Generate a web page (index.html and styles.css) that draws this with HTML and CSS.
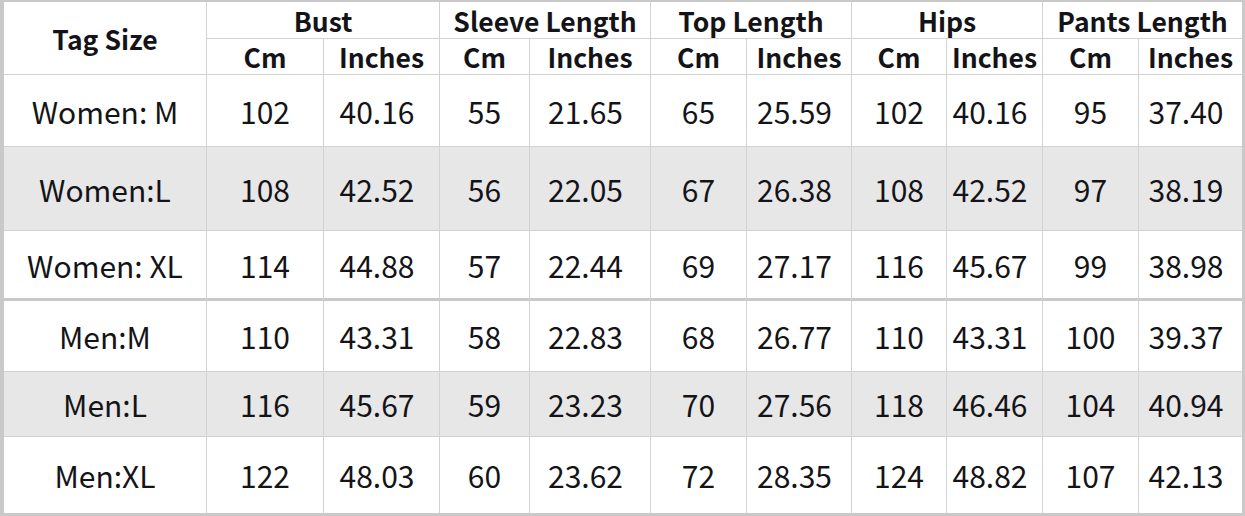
FILE: index.html
```html
<!DOCTYPE html>
<html>
<head>
<meta charset="utf-8">
<link rel="stylesheet" href="styles.css">
</head>
<body>
<div class="frame">
<table class="size-table">
  <colgroup>
    <col class="c0"><col class="c1"><col class="c2"><col class="c3"><col class="c4"><col class="c5"><col class="c6"><col class="c7"><col class="c8"><col class="c9"><col class="c10">
  </colgroup>
  <thead>
    <tr class="h1">
      <th rowspan="2" class="tag">Tag Size</th>
      <th colspan="2">Bust</th>
      <th colspan="2">Sleeve Length</th>
      <th colspan="2">Top Length</th>
      <th colspan="2">Hips</th>
      <th colspan="2" class="last">Pants Length</th>
    </tr>
    <tr class="h2">
      <th>Cm</th><th>Inches</th>
      <th>Cm</th><th>Inches</th>
      <th>Cm</th><th>Inches</th>
      <th>Cm</th><th>Inches</th>
      <th>Cm</th><th class="last">Inches</th>
    </tr>
  </thead>
  <tbody>
    <tr class="r1">
      <td>Women: M</td><td>102</td><td>40.16</td><td>55</td><td>21.65</td><td>65</td><td>25.59</td><td>102</td><td>40.16</td><td>95</td><td class="last">37.40</td>
    </tr>
    <tr class="r2 shade">
      <td>Women:L</td><td>108</td><td>42.52</td><td>56</td><td>22.05</td><td>67</td><td>26.38</td><td>108</td><td>42.52</td><td>97</td><td class="last">38.19</td>
    </tr>
    <tr class="r3 split">
      <td>Women: XL</td><td>114</td><td>44.88</td><td>57</td><td>22.44</td><td>69</td><td>27.17</td><td>116</td><td>45.67</td><td>99</td><td class="last">38.98</td>
    </tr>
    <tr class="r4">
      <td>Men:M</td><td>110</td><td>43.31</td><td>58</td><td>22.83</td><td>68</td><td>26.77</td><td>110</td><td>43.31</td><td>100</td><td class="last">39.37</td>
    </tr>
    <tr class="r5 shade">
      <td>Men:L</td><td>116</td><td>45.67</td><td>59</td><td>23.23</td><td>70</td><td>27.56</td><td>118</td><td>46.46</td><td>104</td><td class="last">40.94</td>
    </tr>
    <tr class="r6 end">
      <td>Men:XL</td><td>122</td><td>48.03</td><td>60</td><td>23.62</td><td>72</td><td>28.35</td><td>124</td><td>48.82</td><td>107</td><td class="last">42.13</td>
    </tr>
  </tbody>
</table>
</div>
</body>
</html>
```

FILE: styles.css
```css
html, body {
  margin: 0;
  padding: 0;
  background: #ffffff;
}

.frame {
  width: 1245px;
  height: 516px;
  box-sizing: border-box;
  border-left: 4px solid #c9c9c9;
  border-top: 2px solid #c9c9c9;
  border-right: 3px solid #c9c9c9;
  border-bottom: 3px solid #c9c9c9;
  background: #ffffff;
}

.size-table {
  width: 1238px;
  table-layout: fixed;
  border-collapse: separate;
  border-spacing: 0;
  font-family: "Noto Sans CJK SC", "Noto Sans", sans-serif;
  color: #141418;
}

.c0 { width: 203px; }
.c1 { width: 117px; }
.c2 { width: 116px; }
.c3 { width: 90px; }
.c4 { width: 121px; }
.c5 { width: 96px; }
.c6 { width: 105px; }
.c7 { width: 95px; }
.c8 { width: 96px; }
.c9 { width: 96px; }
.c10 { width: 103px; }

.size-table th,
.size-table td {
  box-sizing: border-box;
  padding: 0;
  text-align: center;
  vertical-align: middle;
  white-space: nowrap;
  border-right: 1px solid #d2d2d2;
  border-bottom: 1px solid #d2d2d2;
}

.size-table .last {
  border-right: none;
}

.size-table th {
  font-weight: 700;
  font-size: 26.5px;
  line-height: 1;
  padding-top: 2px;
}

.size-table td {
  font-weight: 400;
  font-size: 30px;
  line-height: 1;
}

.size-table td:nth-child(2n+3) {
  padding-right: 9px;
}

.h1 { height: 37px; }
.h2 { height: 36px; }
.r1 { height: 72px; }
.r2 { height: 84px; }
.r3 { height: 70px; }
.r4 { height: 71px; }
.r5 { height: 65px; }
.r6 { height: 76px; }

.shade td {
  background: #e7e7e7;
}

.split td {
  border-bottom: 3px solid #c9c9c9;
}

.end td {
  border-bottom: none;
}
```
